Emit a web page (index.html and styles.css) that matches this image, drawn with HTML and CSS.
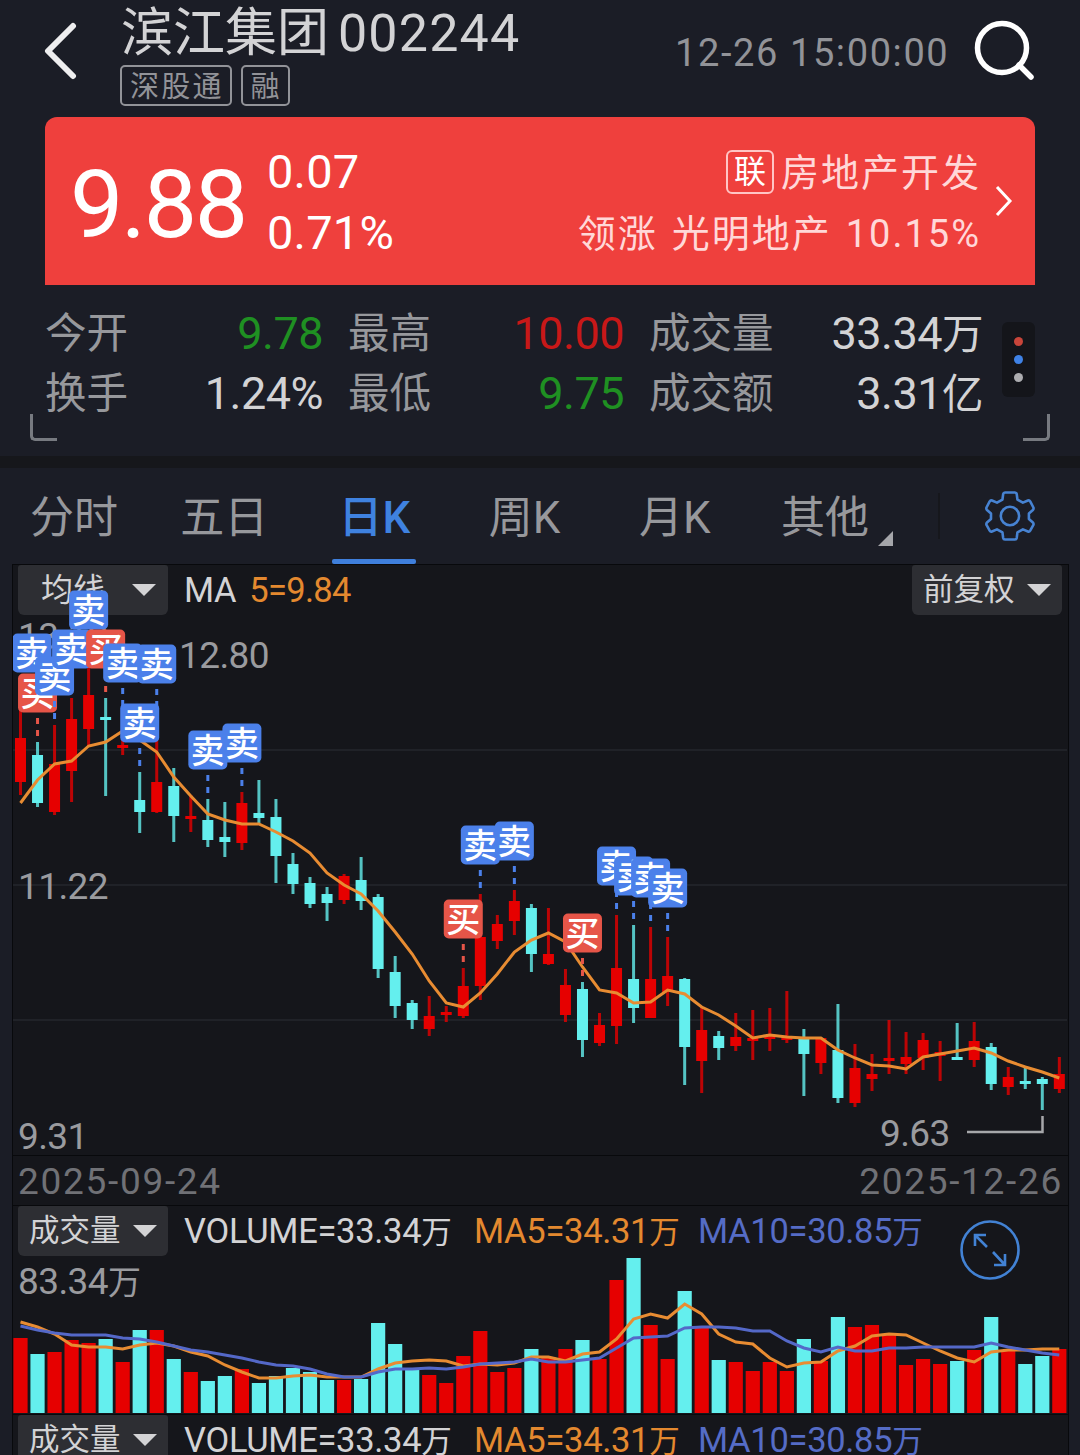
FILE: index.html
```html
<!DOCTYPE html>
<html lang="zh-CN">
<head>
    <meta charset="UTF-8">
    <meta name="viewport" content="width=device-width, initial-scale=1.0">
    <title>滨江集团 002244</title>
    <link rel="stylesheet" href="styles.css">
</head>
<body>
    <header class="topbar">
        <svg class="back" width="34" height="58" viewBox="0 0 34 58"><path d="M29 4 L4 29 L29 54"/></svg>
        <div class="stock">
            <h1>滨江集团 <span class="code">002244</span></h1>
            <div class="tags"><span>深股通</span><span>融</span></div>
        </div>
        <span class="time">12-26 15:00:00</span>
        <svg class="search" width="64" height="64" viewBox="0 0 64 64"><circle cx="29" cy="29" r="24.5"/><path d="M46 46 L58 58"/></svg>
    </header>

    <!-- Current price -->
    <section class="price-card">
        <div class="price">9.88</div>
        <div class="change">
            <span>0.07</span>
            <span>0.71%</span>
        </div>
        <div class="sector">
            <div><i class="link-tag">联</i>房地产开发</div>
            <div class="leader">领涨 光明地产 10.15%</div>
        </div>
        <svg class="arrow" width="18" height="34" viewBox="0 0 18 34"><path d="M2 3 L15 17 L2 31"/></svg>
    </section>

    <section class="stats">
        <div class="stats-grid">
            <label>今开</label><b class="down">9.78</b>
            <label>最高</label><b class="up">10.00</b>
            <label>成交量</label><b>33.34<em>万</em></b>
            <label>换手</label><b>1.24%</b>
            <label>最低</label><b class="down">9.75</b>
            <label>成交额</label><b>3.31<em>亿</em></b>
        </div>
        <div class="dots"><i class="dot-red"></i><i class="dot-blue"></i><i class="dot-gray"></i></div>
        <span class="corner corner-left"></span>
        <span class="corner corner-right"></span>
    </section>

    <nav class="tabs">
        <a>分时</a>
        <a>五日</a>
        <a class="active">日K</a>
        <a>周K</a>
        <a>月K</a>
        <a class="more">其他</a>
        <span class="divider"></span>
        <svg class="gear" width="52" height="52" viewBox="0 0 52 52">
            <path d="M21 2.5 H31 Q32.500 2.500 32.800 4 L33.500 9.500 L39 12.600 L44 10.500 Q45.500 10 46.300 11.300 L49.500 17.500 Q50 19 49 20 L45 23.500 V29 L49 32.500 Q50 33.500 49.500 35 L46.300 40.700 Q45.500 42 44 41.500 L39 39.400 L33.500 42.500 L32.800 48 Q32.500 49.500 31 49.500 H21 Q19.500 49.500 19.200 48 L18.500 42.500 L13 39.400 L8 41.500 Q6.500 42 5.700 40.700 L2.500 35 Q2 33.500 3 32.500 L7 29 V23.500 L3 20 Q2 19 2.500 17.500 L5.700 11.300 Q6.500 10 8 10.500 L13 12.600 L18.500 9.500 L19.200 4 Q19.500 2.500 21 2.500 Z"/>
            <circle cx="26" cy="26" r="9.200"/>
        </svg>
    </nav>

    <main class="charts">
        <!-- Daily K -->
        <section class="panel k-panel">
            <div class="toolbar">
                <span class="select select-ma">均线</span>
                <span class="legend">MA</span>
                <span class="legend orange ma-value">5=9.84</span>
                <span class="select select-right">前复权</span>
            </div>
            <svg id="kChart" width="1055" height="590" viewBox="13 565 1055 590"></svg>
        </section>
        <div class="dates"><span>2025-09-24</span><span>2025-12-26</span></div>

        <!-- Volume -->
        <section class="panel vol-panel">
            <div class="toolbar">
                <span class="select">成交量</span>
                <span class="legend l-vol">VOLUME=33.34<em>万</em></span>
                <span class="legend l-ma5 orange">MA5=34.31<em>万</em></span>
                <span class="legend l-ma10 blue">MA10=30.85<em>万</em></span>
            </div>
            <svg id="volChart" width="1055" height="208" viewBox="13 1206 1055 208"></svg>
        </section>
        <section class="panel vol-panel last-panel">
            <div class="toolbar">
                <span class="select">成交量</span>
                <span class="legend l-vol">VOLUME=33.34<em>万</em></span>
                <span class="legend l-ma5 orange">MA5=34.31<em>万</em></span>
                <span class="legend l-ma10 blue">MA10=30.85<em>万</em></span>
            </div>
        </section>
    </main>

    <script src="chart.js"></script>
</body>
</html>
```
FILE: styles.css
```css
* {
    box-sizing: border-box;
    margin: 0;
    padding: 0;
}

body {
    width: 1080px;
    height: 1455px;
    overflow: hidden;
    background-color: #1b1d26;
    color: #d3d3d5;
    font-family: Roboto, "Noto Sans CJK SC", sans-serif;
}

i, em {
    font-style: normal;
}

svg {
    display: block;
    fill: none;
}

/* Header */
.topbar {
    display: flex;
    height: 117px;
    padding-left: 44px;
}

.back {
    margin-top: 22px;
    stroke: #eeeeef;
    stroke-width: 6;
    stroke-linecap: round;
    stroke-linejoin: round;
}

.stock {
    width: 480px;
    margin-left: 42px;
}

.stock h1 {
    height: 65px;
    line-height: 67px;
    padding-left: 1px;
    font-size: 52px;
    font-weight: 400;
    white-space: nowrap;
    word-spacing: -4px;
}

.code {
    letter-spacing: 1.2px;
}

.tags {
    display: flex;
    gap: 9px;
}

.tags span {
    height: 41px;
    line-height: 41px;
    padding: 0 6px 0 8px;
    border: 2px solid #929398;
    border-radius: 5px;
    font-size: 29px;
    letter-spacing: 2.2px;
    color: #929398;
}

.time {
    width: 275px;
    margin-left: 75px;
    line-height: 107px;
    font-size: 38px;
    letter-spacing: 1.6px;
    white-space: nowrap;
    color: #929398;
}

.search {
    margin: 19px 0 0 23px;
    stroke: #fff;
    stroke-width: 5.5;
    stroke-linecap: round;
}

/* Red price card */
.price-card {
    display: flex;
    height: 168px;
    margin: 0 45px;
    border-radius: 12px 12px 0 0;
    background-color: #ef403d;
    color: #fff;
}

.price {
    width: 197px;
    margin-left: 25px;
    line-height: 175px;
    font-size: 95px;
    letter-spacing: -2.4px;
}

.change {
    width: 180px;
    padding-top: 24px;
    font-size: 47px;
    line-height: 61px;
}

.change span {
    display: block;
    letter-spacing: 0.2px;
}

.sector {
    flex: 1;
    padding-top: 26px;
    text-align: right;
    font-size: 38px;
    line-height: 61px;
    letter-spacing: 2px;
    white-space: nowrap;
    color: #ffd8d8;
}

.sector div {
    height: 61px;
}

.leader {
    word-spacing: 2.5px;
}

.link-tag {
    display: inline-block;
    width: 48px;
    height: 44px;
    margin-right: 7px;
    line-height: 41px;
    border: 2px solid #ffc5c5;
    border-radius: 6px;
    font-size: 32px;
    letter-spacing: 0;
    text-align: center;
    vertical-align: 3px;
    color: #fff;
}

.arrow {
    margin: 67px 22px 0 14px;
    stroke: #fff;
    stroke-width: 3;
}

/* Quote numbers */
.stats {
    position: relative;
    display: flex;
    height: 171px;
    padding: 18px 45px 0;
}

.stats-grid {
    display: grid;
    grid-template-columns: 120px 158px 131px 170px 168px 191px;
    grid-template-rows: 60px 60px;
    width: 938px;
    font-size: 41.5px;
    line-height: 61px;
}

.stats-grid label {
    color: #97989c;
}

.stats-grid label:nth-of-type(3n+2),
.stats-grid label:nth-of-type(3n) {
    padding-left: 25px;
}

.stats-grid b {
    font-size: 45px;
    font-weight: 400;
    text-align: right;
    white-space: nowrap;
    letter-spacing: -0.5px;
}

.stats-grid em {
    font-size: 41.5px;
}

.up {
    color: #c81818;
}

.down {
    color: #1f9022;
}

.dots {
    display: flex;
    flex-direction: column;
    align-items: center;
    justify-content: center;
    gap: 9px;
    width: 33px;
    height: 75px;
    margin: 19px 0 0 19px;
    border-radius: 6px;
    background-color: #14151a;
}

.dots i {
    width: 9px;
    height: 9px;
    border-radius: 50%;
}

.dot-red {
    background-color: #c8453a;
}

.dot-blue {
    background-color: #3f82e6;
}

.dot-gray {
    background-color: #adadb0;
}

.corner {
    position: absolute;
    top: 129px;
    width: 27px;
    height: 27px;
    border-bottom: 3px solid #777a80;
}

.corner-left {
    left: 30px;
    border-left: 3px solid #777a80;
    border-bottom-left-radius: 5px;
}

.corner-right {
    right: 30px;
    border-right: 3px solid #777a80;
    border-bottom-right-radius: 5px;
}

/* Period tabs */
.tabs {
    display: flex;
    height: 108px;
    padding-right: 44px;
    border-top: 12px solid #16171b;
    font-size: 44px;
    line-height: 100px;
    color: #97989c;
}

.tabs a {
    position: relative;
    width: 150.5px;
    text-align: center;
}

.tabs a:first-child {
    margin-left: -1px;
}

.tabs .active {
    color: #3f82e0;
    font-weight: 500;
}

.tabs .active::after {
    content: "";
    position: absolute;
    left: 33px;
    bottom: 0;
    width: 84px;
    height: 5px;
    border-radius: 2px;
    background-color: #3f7fdc;
}

.more::after {
    content: "";
    position: absolute;
    right: 7px;
    bottom: 18px;
    border-left: 15px solid transparent;
    border-bottom: 15px solid #a5a6aa;
}

.divider {
    width: 2px;
    height: 46px;
    margin: 25px 0 0 38px;
    background-color: #16171c;
}

.gear {
    margin: 22px 0 0 44px;
    stroke: #4783d2;
    stroke-width: 2.6;
    stroke-linejoin: round;
}

/* Charts */
.charts {
    width: 1057px;
    margin-left: 12px;
    border: 1px solid #08090c;
    border-width: 1px 1px 0;
    background-color: #15161b;
}

.panel {
    display: grid;
}

.panel > * {
    grid-area: 1 / 1;
}

.k-panel {
    height: 590px;
}

.vol-panel {
    height: 209px;
    border-top: 1px solid #08090c;
}

.last-panel {
    height: 41px;
    overflow: hidden;
}

.toolbar {
    display: flex;
    height: 50px;
    padding: 0 6px 0 5px;
}

.select {
    display: flex;
    align-items: center;
    gap: 12px;
    width: 150px;
    height: 50px;
    padding-left: 11px;
    border-radius: 3px 3px 6px 6px;
    background-color: #2d2e33;
    font-size: 30.5px;
    line-height: 48px;
}

.select::after {
    content: "";
    border: 12px solid transparent;
    border-top-color: #d3d3d5;
    border-bottom: 0;
}

.select-ma {
    gap: 27px;
    padding-left: 23px;
    font-size: 32px;
}

.select-right {
    margin-left: auto;
}

.legend {
    margin-left: 16px;
    line-height: 51px;
    font-size: 34.5px;
    letter-spacing: -0.3px;
    white-space: nowrap;
}

.legend em {
    font-size: 30.5px;
}

.ma-value {
    margin-left: 13px;
    letter-spacing: -0.7px;
}

.l-vol {
    width: 274px;
}

.l-ma5 {
    width: 208px;
}

.orange {
    color: #e4892f;
}

.blue {
    color: #556cc6;
}

.dates {
    display: flex;
    justify-content: space-between;
    height: 50px;
    padding: 0 5px;
    border-top: 1px solid #08090c;
    line-height: 52px;
    font-size: 37px;
    letter-spacing: 1.7px;
    color: #707176;
}

.grid-line {
    stroke: #202228;
    stroke-width: 2;
}

.axis-text {
    fill: #9a9b9f;
    font-size: 37px;
    letter-spacing: -0.6px;
}

.candle-up, .bar-up {
    fill: #e60000;
}

.candle-down, .bar-down {
    fill: #64efee;
}

.ma-line {
    stroke: #e88c32;
    stroke-width: 3;
}

.ma10-line {
    stroke: #5468c8;
    stroke-width: 3;
}

.mark-sell {
    fill: #4b80ea;
}

.mark-buy {
    fill: #e65548;
}

.mark-text {
    fill: #fff;
    font-size: 34px;
    font-weight: 500;
    text-anchor: middle;
}

.low-pointer {
    stroke: #a6a7aa;
    stroke-width: 2.5;
}

.expand {
    stroke: #4282d4;
    stroke-width: 2.6;
}
```
FILE: chart.js
```js
// [high, body top, body bottom, low, up = 1 / down = 0, mark]
const candles = [
    [702, 738, 782, 795, 1, 'S'], [742, 755, 803, 807, 0, 'B'], [725, 764, 812, 815, 1, 'S'], [698, 719, 771, 802, 1, 'S'],
    [659, 695, 729, 746, 1, 'S'], [698, 717, 720, 796, 0, 'B'], [712, 745, 748, 755, 1, 'S'], [772, 800, 812, 833, 0, 'S'],
    [713, 782, 812, 813, 1, 'S'], [768, 786, 816, 842, 0], [795, 816, 819, 832, 1], [799, 820, 840, 847, 0, 'S'],
    [802, 837, 842, 857, 0], [792, 803, 843, 850, 1, 'S'], [780, 813, 818, 823, 0], [799, 817, 856, 883, 0],
    [853, 864, 884, 894, 0], [877, 883, 904, 908, 0], [887, 894, 903, 921, 0], [874, 876, 900, 904, 1],
    [857, 880, 901, 910, 0], [894, 897, 969, 978, 0], [956, 972, 1006, 1018, 0], [1000, 1003, 1020, 1029, 0],
    [996, 1016, 1029, 1036, 1], [1006, 1012, 1015, 1022, 1], [968, 986, 1016, 1018, 1, 'B'], [894, 937, 986, 1000, 1, 'S'],
    [915, 924, 941, 949, 1], [890, 901, 921, 935, 1, 'S'], [904, 908, 954, 972, 0], [908, 954, 964, 965, 1],
    [969, 985, 1015, 1022, 1], [982, 989, 1040, 1057, 0, 'B'], [1013, 1025, 1043, 1046, 1], [915, 968, 1026, 1044, 1, 'S'],
    [925, 979, 1008, 1023, 0, 'S'], [927, 979, 1018, 1018, 1, 'S'], [937, 976, 992, 1006, 1, 'S'], [978, 979, 1047, 1085, 0],
    [1007, 1030, 1061, 1093, 1], [1031, 1036, 1048, 1060, 0], [1013, 1037, 1046, 1051, 1], [1010, 1038, 1041, 1060, 1],
    [1008, 1036, 1039, 1051, 1], [991, 1037, 1040, 1043, 1], [1029, 1038, 1054, 1096, 0], [1037, 1038, 1063, 1074, 1],
    [1004, 1050, 1098, 1103, 0], [1044, 1068, 1103, 1107, 1], [1054, 1074, 1079, 1091, 1], [1020, 1058, 1061, 1074, 1],
    [1032, 1057, 1064, 1074, 1], [1033, 1040, 1058, 1070, 1], [1041, 1052, 1056, 1081, 1], [1023, 1057, 1060, 1060, 0],
    [1022, 1041, 1060, 1067, 1], [1043, 1047, 1084, 1090, 0], [1067, 1077, 1087, 1095, 1], [1068, 1081, 1084, 1089, 0],
    [1077, 1079, 1084, 1110, 0], [1057, 1074, 1089, 1093, 1]
];

const ma5 = [
    803, 780, 764, 761, 746, 742, 731, 740, 752, 777, 796, 814, 820, 824, 824, 832, 841, 853, 873, 885, 894,
    911, 932, 954, 981, 1003, 1007, 993, 974, 952, 940, 933, 942, 967, 990, 993, 1003, 1002, 990, 994, 1007,
    1015, 1026, 1038, 1035, 1037, 1038, 1038, 1050, 1058, 1065, 1066, 1069, 1057, 1054, 1051, 1048, 1053,
    1061, 1067, 1072, 1078
];

const volumes = [
    1338, 1354, 1352, 1340, 1343, 1339, 1362, 1330, 1330, 1359, 1372, 1381, 1376, 1369, 1383, 1376, 1368, 1372,
    1380, 1380, 1379, 1323, 1344, 1370, 1375, 1383, 1356, 1331, 1372, 1368, 1349, 1357, 1349, 1340, 1359, 1280,
    1258, 1325, 1359, 1291, 1327, 1360, 1362, 1371, 1362, 1371, 1339, 1361, 1317, 1327, 1325, 1334, 1365, 1359,
    1364, 1361, 1350, 1317, 1351, 1364, 1356, 1349
];

const volMa5 = [
    1322, 1327, 1334, 1345, 1347, 1347, 1349, 1345, 1343, 1346, 1352, 1356, 1365, 1372, 1378, 1378, 1376, 1375,
    1377, 1377, 1377, 1369, 1363, 1361, 1360, 1361, 1366, 1364, 1365, 1363, 1357, 1357, 1361, 1354, 1352, 1339,
    1319, 1314, 1318, 1304, 1314, 1334, 1342, 1344, 1358, 1367, 1363, 1362, 1351, 1346, 1336, 1334, 1335, 1343,
    1351, 1358, 1362, 1352, 1350, 1350, 1349, 1349
];

const volMa10 = [
    1326, 1330, 1333, 1335, 1335, 1335, 1338, 1339, 1342, 1346, 1350, 1352, 1355, 1358, 1362, 1365, 1366, 1369,
    1374, 1377, 1377, 1372, 1369, 1369, 1368, 1369, 1367, 1364, 1363, 1362, 1359, 1362, 1362, 1360, 1358, 1348,
    1338, 1337, 1336, 1328, 1327, 1327, 1328, 1331, 1331, 1341, 1348, 1352, 1347, 1351, 1351, 1348, 1348, 1347,
    1347, 1347, 1347, 1343, 1347, 1350, 1353, 1355
];

const xAt = i => 20.5 + i * 17.03;

function line(values, cls) {
    const points = values.map((y, i) => `${xAt(i).toFixed(1)},${y}`).join(' ');
    return `<polyline class="${cls}" points="${points}"/>`;
}

function drawK() {
    let html = '';
    [750, 885, 1020].forEach(y => {
        html += `<path class="grid-line" d="M13 ${y} H1067"/>`;
    });
    html += `
        <text class="axis-text" x="18" y="649">13.13</text>
        <text class="axis-text" x="18" y="899">11.22</text>
        <text class="axis-text" x="18" y="1149">9.31</text>
        <text class="axis-text" x="179" y="668">12.80</text>
        <text class="axis-text" x="880" y="1146">9.63</text>
        <path class="low-pointer" d="M967 1132 H1042.5 V1116"/>`;

    candles.forEach(([high, top, bottom, low, up], i) => {
        const x = xAt(i);
        html += `<g class="${up ? 'candle-up' : 'candle-down'}">
            <rect x="${x - 1.5}" y="${high}" width="3" height="${low - high}" opacity="0.8"/>
            <rect x="${x - 5.5}" y="${top}" width="11" height="${bottom - top}"/></g>`;
    });
    html += line(ma5, 'ma-line');

    // buy / sell marks sit above the high of their day
    candles.forEach(([high, , , , , mark], i) => {
        if (!mark) return;
        const x = xAt(i);
        const cx = Math.max(x, 32);
        const cls = mark === 'S' ? 'mark-sell' : 'mark-buy';
        html += `<g class="${cls}">
            <rect x="${x - 1.5}" y="${high - 24}" width="3" height="6"/>
            <rect x="${x - 1.5}" y="${high - 12}" width="3" height="6"/>
            <rect x="${cx - 19.5}" y="${high - 68.5}" width="39" height="39" rx="5"/></g>
            <text class="mark-text" x="${cx}" y="${high - 36.5}">${mark === 'S' ? '卖' : '买'}</text>`;
    });
    document.getElementById('kChart').innerHTML = html;
}

function drawVolume() {
    let html = '<text class="axis-text" x="18" y="1294">83.34<tspan font-size="33">万</tspan></text>';
    volumes.forEach((y, i) => {
        html += `<rect class="${candles[i][4] ? 'bar-up' : 'bar-down'}" x="${xAt(i) - 7.1}" y="${y}" width="14.2" height="${1413 - y}"/>`;
    });
    html += line(volMa5, 'ma-line') + line(volMa10, 'ma10-line');
    html += `<g class="expand">
        <circle cx="990" cy="1250" r="28.500"/>
        <path d="M987 1247 L975 1235 M975 1246 V1235 H986 M993 1252 L1005 1265 M1005 1254 V1265 H994"/></g>`;
    document.getElementById('volChart').innerHTML = html;
}

drawK();
drawVolume();
```
